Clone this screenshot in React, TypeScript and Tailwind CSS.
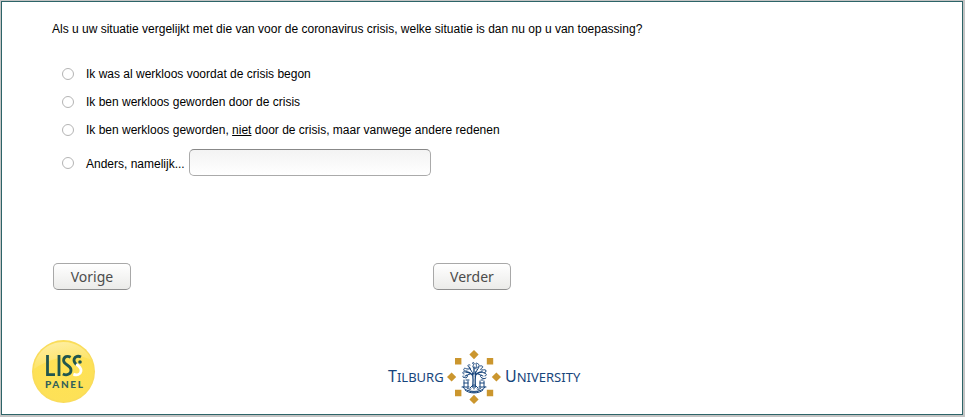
import React from 'react';

const buttonClass =
  'h-[27px] w-[78px] rounded-[5px] border border-[#a8a8a8] border-b-[#8f8f8f] bg-linear-to-b from-white to-[#ebebe9] font-["Noto_Sans",sans-serif] text-sm leading-5 text-[#4c4c4c]';

const radioClass =
  'size-3 shrink-0 appearance-none rounded-full border border-[#b4b4b4] bg-white checked:border-4 checked:border-[#2d6468]';

function Option({ id, children }: { id: string; children: React.ReactNode }) {
  return (
    <div className="flex h-7 items-center gap-3">
      <input type="radio" name="situatie" id={id} className={radioClass} />
      <label htmlFor={id}>{children}</label>
    </div>
  );
}

function LissLogo() {
  return (
    <svg width="64" height="64" viewBox="0 0 64 64" role="img" aria-label="LISS Panel" className="shrink-0">
      <defs>
        <radialGradient id="ball" cx="50%" cy="50%" r="50%">
          <stop offset="0" stopColor="#ffe254" />
          <stop offset="0.92" stopColor="#fde157" />
          <stop offset="1" stopColor="#f8da5c" />
        </radialGradient>
        <linearGradient id="shine" x1="0" y1="0" x2="0.4" y2="1">
          <stop offset="0" stopColor="#fff" stopOpacity="0.5" />
          <stop offset="1" stopColor="#fff" stopOpacity="0.05" />
        </linearGradient>
      </defs>
      <circle cx="31.5" cy="31.5" r="31.5" fill="url(#ball)" />
      <path d="M2 29C3 13 16 2 31.5 2c13 0 24 8 28 18C44 12 20 17 2 29Z" fill="url(#shine)" />
      <g fill="none" stroke="#20564f" strokeWidth="2.8">
        <path d="M15.5 15v19.6H23" />
        <path d="M27 15v21" />
        <path d="M38.6 17.2c-3-1.8-7-.8-7 3.2 0 4.6 7.4 4.6 7.4 9.6 0 4.4-4.4 5.8-8.2 4" />
        <path d="M49 17c-3.6-1.8-7-.2-7 3.3 0 2 1.3 3.4 3 4.6" />
      </g>
      <path d="M44.2 24.2c3 2.2 5.2 3.8 4.8 6.900-.5 3.500-4 4.600-7.600 3" fill="none" stroke="#fff" strokeWidth="2.8" />
      <circle cx="48" cy="22" r="1.8" fill="#20564f" />
      <text x="13" y="48" fontFamily="Lato, sans-serif" fontSize="10" fontWeight="900" letterSpacing="1.6" fill="#33615a">PANEL</text>
    </svg>
  );
}

function Emblem() {
  return (
    <svg width="54" height="54" viewBox="-27 -27 54 54" role="img" aria-label="Tilburg University zegel" className="shrink-0">
      <g fill="#cb962e">
        <path d="M0-27 4.6-22.4 0-17.8-4.6-22.4ZM0 17.8 4.6 22.4 0 27-4.6 22.4ZM-22.4-4.6-17.8 0-22.4 4.6-27 0ZM22.4-4.6 27 0 22.4 4.6 17.8 0Z" />
        <path d="M-19-19h6.4v6.4H-19ZM12.8-19h6.4v6.4h-6.4ZM-19 12.8h6.4v6.4H-19ZM12.8 12.8h6.4v6.4h-6.4Z" />
      </g>
      <g fill="none" stroke="#17457c" strokeWidth="1" strokeLinecap="round" strokeLinejoin="round">
        <path d="M-1.2 10c.5-5 .4-9-.2-14M1.3 10C1 4 1.2 0 1.7-5M-1-1C-3-4-6-5-8-5M1-1c2-3 5-4 7-4M0-3v-7" strokeWidth="1.3" />
        <path d="M-2-5-5-10M2-5l3-5M-4-3-9-1M4-3l5 2M-1 8-4 11M1 8l3 3M0 8v4" />
        <path d="M-1-13c-2-2 2-2 1 0s-2 3 0 4 3-2 2-4 4 0 3 2-4 1-3 3M-4-12c-2-1-3 1-1 2s2 2-1 2-3-2-4 0 1 2 3 2M-9-5c-3-1-3 2-1 2M6-11c2-1 4 1 2 2s-2 2 0 2 4-1 4 1-2 2-4 1M10-4c3 0 3 3 1 3M-11-1c-1 2 2 2 3 1M8 1c1 1 3 1 4 0M-7-2c1 1 1 2-1 3M7-2c-1 1-1 2 1 3" />
        <path d="M-10 3v7M-10 6h4M-6 4v6M-8 3h3M6 4v6M10 4v6M6 6h4M7 3h2M5 10h7M-12 10h7" />
        <path d="M-11 10c2 6 20 6 22 0M-9 13c4 4 14 4 18 0M-7 11c2 1 3 2 4 1M3 12c1 1 3 0 4-1M-4 14.5c3 1 5 1 8 0" />
      </g>
    </svg>
  );
}

function TilburgLogo() {
  return (
    <div className='flex items-center font-["Noto_Sans",sans-serif] text-base leading-5 text-[#17457c]'>
      <span className="w-[59px] pb-0.5">T<span className="text-[13px]">ILBURG</span></span>
      <Emblem />
      <span className="pb-0.5 pl-1">U<span className="text-[13px]">NIVERSITY</span></span>
    </div>
  );
}

export default function App() {
  return (
    <div className="flex min-h-screen flex-col bg-[#c4c4c4] pt-px pr-0.5 pb-0.5 pl-px">
      <form
        className='grow border border-[#2d6468] bg-white pb-2 font-["Liberation_Sans",Arial,sans-serif] text-xs leading-4 text-black'
        onSubmit={(event) => event.preventDefault()}
      >
        <fieldset className="px-[50px] pt-[19px]">
          <legend className="float-left w-full">
            Als u uw situatie vergelijkt met die van voor de coronavirus crisis, welke situatie is dan nu op u van toepassing?
          </legend>
          <div className="clear-both pt-[23px] pl-[10px]">
            <Option id="al-werkloos">Ik was al werkloos voordat de crisis begon</Option>
            <Option id="door-crisis">Ik ben werkloos geworden door de crisis</Option>
            <Option id="niet-door-crisis">
              Ik ben werkloos geworden, <span className="underline">niet</span> door de crisis, maar vanwege andere redenen
            </Option>
            <div className="flex h-[37px] items-center">
              <input type="radio" name="situatie" id="anders" className={radioClass} />
              <label htmlFor="anders" className="pt-0.5 pl-3">Anders, namelijk...</label>
              <input
                type="text"
                aria-label="Anders, namelijk"
                className="ml-1 h-[27px] w-[242px] rounded-[5px] border border-[#aaaaaa] border-t-[#888888] bg-linear-to-b from-[#f3f3f3] to-white px-2"
              />
            </div>
          </div>
        </fieldset>
        <div className="flex gap-[302px] pt-[82px] pl-[51px]">
          <button type="button" className={buttonClass}>Vorige</button>
          <button type="submit" className={buttonClass}>Verder</button>
        </div>
        <footer className="flex items-center pt-[50px] pl-[30px]">
          <LissLogo />
          <div className="pt-[10px] pl-[292px]">
            <TilburgLogo />
          </div>
        </footer>
      </form>
    </div>
  );
}
